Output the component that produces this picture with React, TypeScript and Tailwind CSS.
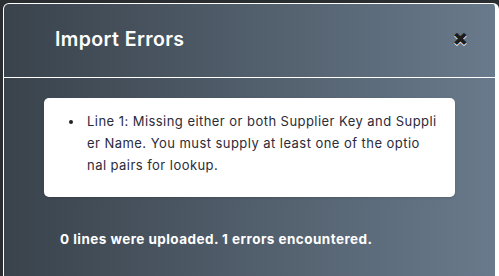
import React from "react";

function ImportErrorsModal() {
  const lines = [
    "Line 1: Missing either or both Supplier Key and Suppli",
    "er Name. You must supply at least one of the optio",
    "nal pairs for lookup.",
  ];
  return (
    <div className="h-[276px] w-[499px] overflow-hidden bg-[#2b2e31] pl-[3px] pt-[3px] font-['Inter',sans-serif]">
      <div className="h-[290px] rounded-t-[6px] border-l border-t border-r-[4px] border-white bg-gradient-to-r from-[#3a434c] to-[#697a8c]">
        <div className="flex h-[73px] items-center justify-between pl-[51px] pr-[27px]">
          <h1 className="pb-[2px] text-[19.5px] font-semibold tracking-[0.4px] text-white">
            Import Errors
          </h1>
          <button className="pb-[8px] text-[22px] font-black leading-none text-[#1c1c1c] [text-shadow:0_1px_0_#fff]">
            ×
          </button>
        </div>
        <div className="h-px bg-white" />
        <div className="px-[40px] pt-[20px]">
          <div className="rounded-[5px] bg-white pb-[21px] pl-[40px] pr-[10px] pt-[12px] shadow-sm">
            <ul className="list-disc text-[13px] leading-[22px] tracking-[0.45px] text-[#2b2b3a]">
              <li className="pl-[3px] marker:text-[#222]">
                {lines.map((l, i) => (
                  <span key={i} className="block whitespace-nowrap">
                    {l}
                  </span>
                ))}
              </li>
            </ul>
          </div>
          <p className="pl-[16px] pt-[32px] text-[13.5px] font-bold tracking-[0.45px] text-white">
            0 lines were uploaded. 1 errors encountered.
          </p>
        </div>
      </div>
    </div>
  );
}

export default function App() {
  return <ImportErrorsModal />;
}
